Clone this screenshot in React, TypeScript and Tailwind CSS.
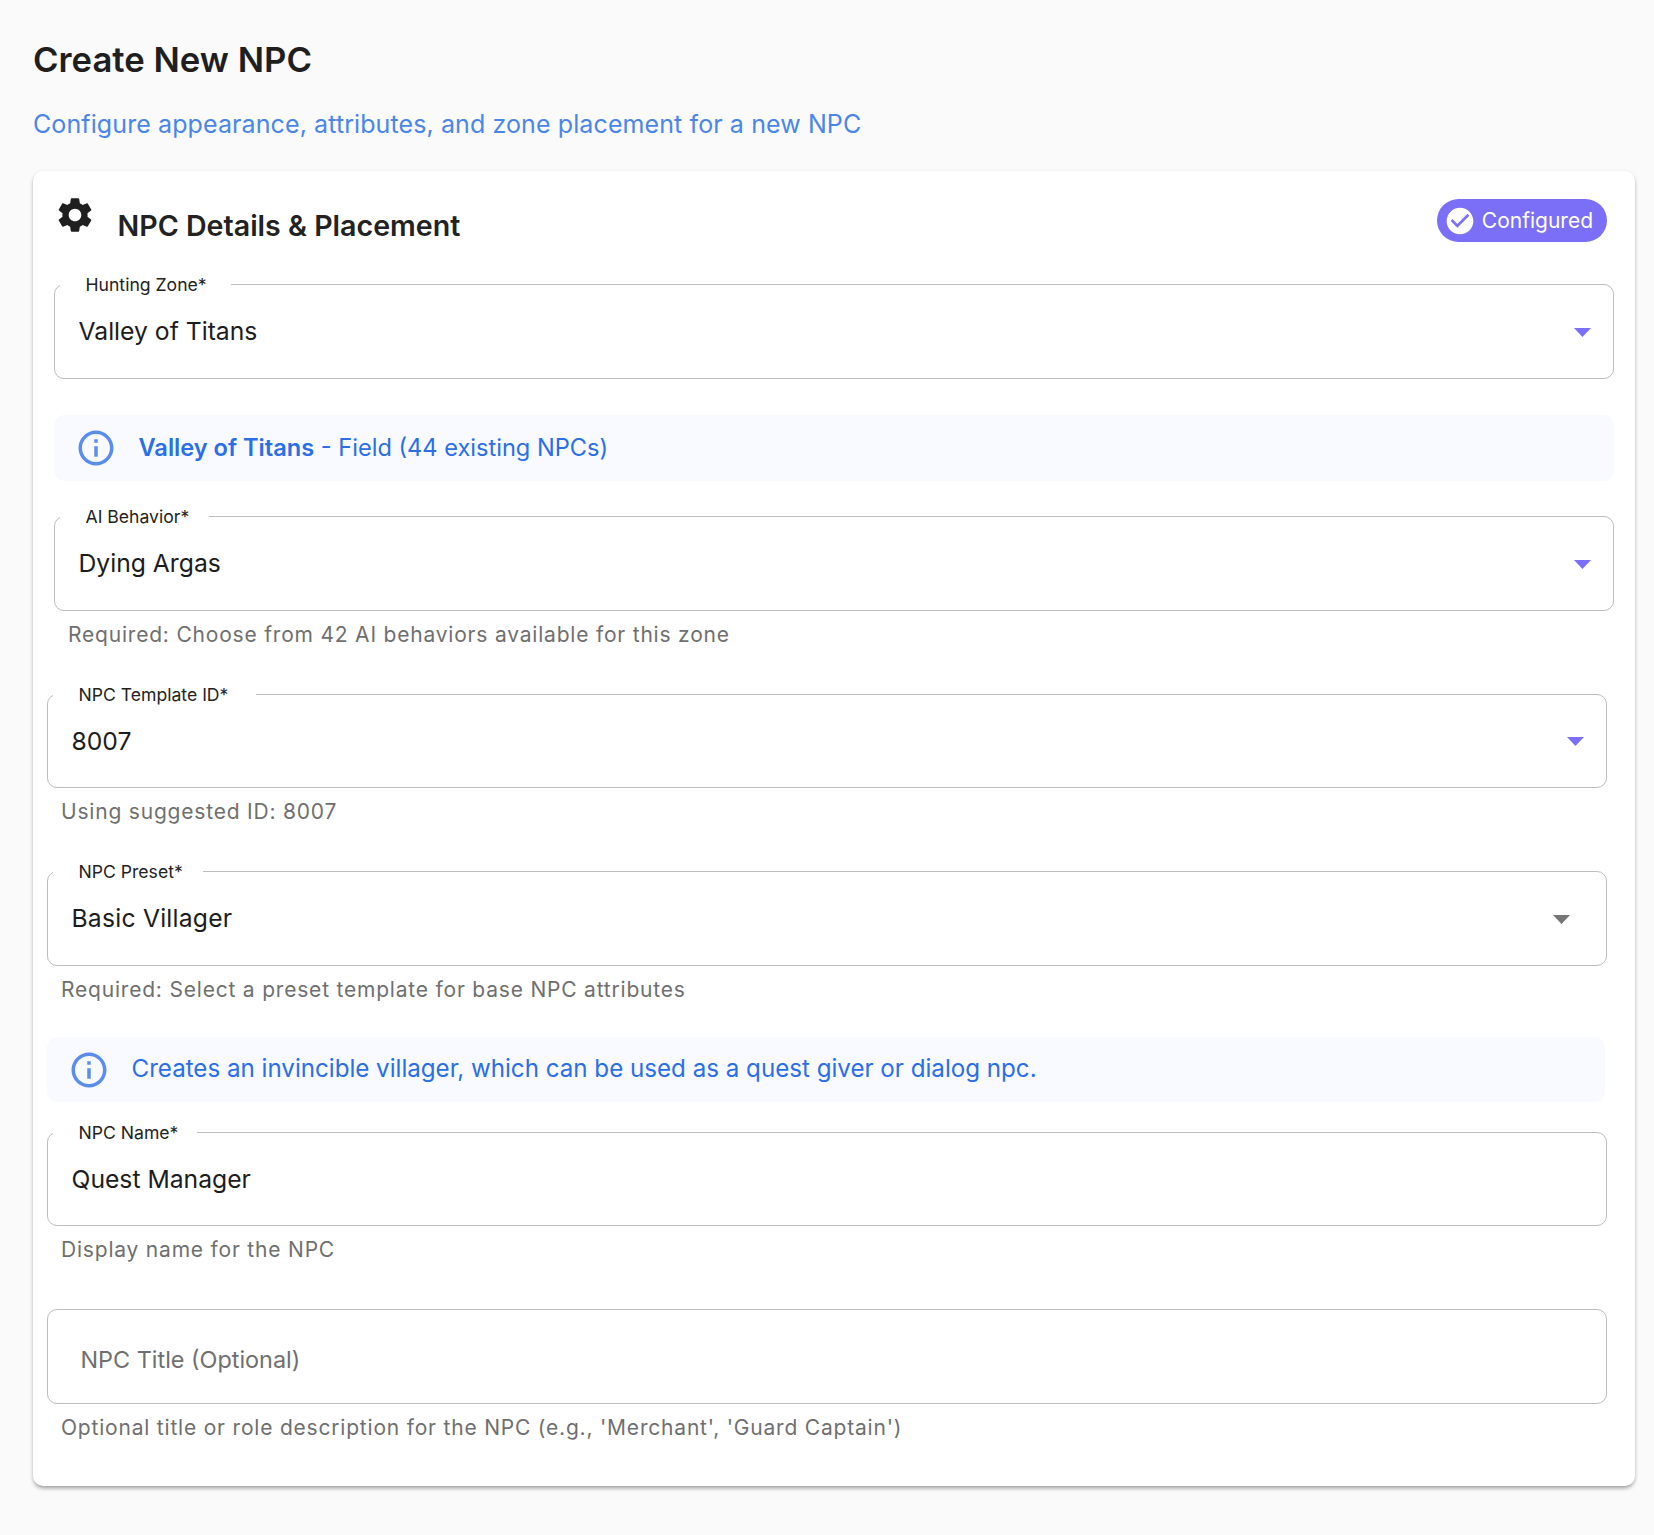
import React from "react";
import { MdSettings, MdCheckCircle, MdInfoOutline } from "react-icons/md";

function Arrow({ color }: { color: string }) {
  return (
    <svg viewBox="0 0 17 9" className="mt-[1px] w-[17px] h-[9px]" fill={color}>
      <path d="M0 0h17l-8.5 9z" />
    </svg>
  );
}

function Field({
  label,
  labelClass,
  value,
  valueClass,
  helper,
  arrow,
  arrowClass,
  placeholder,
  className,
  heightClass,
}: {
  label?: string;
  labelClass?: string;
  value: string;
  valueClass?: string;
  helper?: string;
  arrow?: string;
  arrowClass?: string;
  placeholder?: boolean;
  className?: string;
  heightClass: string;
}) {
  return (
    <div className={className}>
      <div className={`relative rounded-[10px] border border-[#bdbdbd] flex items-center justify-between bg-white pl-[23.5px] ${heightClass}`}>
        {label && (
          <span className={`absolute left-[5px] top-[-10px] bg-white pl-[25.5px] text-[17.6px] leading-[20px] text-[#222222] ${labelClass ?? ""}`}>
            {label}
          </span>
        )}
        {placeholder ? (
          <span className="pl-[9px] pt-[7px] text-[23.4px] text-[#6f6f6f]">{value}</span>
        ) : (
          <span className={`pt-[1px] text-[24.7px] text-[#1c1c1c] ${valueClass ?? ""}`}>{value}</span>
        )}
        {arrow && (
          <span className={arrowClass}>
            <Arrow color={arrow} />
          </span>
        )}
      </div>
      {helper && (
        <p className="mt-[10px] ml-[14px] text-[21px] leading-[28px] tracking-[0.8px] text-[#6f6f6f]">{helper}</p>
      )}
    </div>
  );
}

function Alert({ children, className }: { children: React.ReactNode; className?: string }) {
  return (
    <div className={`rounded-[10px] bg-[#f8faff] flex items-center pl-6 ${className ?? ""}`}>
      <MdInfoOutline className="w-[42px] h-[42px] -ml-[3px] text-[#5b8def] shrink-0" />
      <span className="ml-[21.5px] text-[#2a6ee8]">{children}</span>
    </div>
  );
}

export default function App() {
  return (
    <div className="min-h-[1535px] bg-[#fafafa] pl-[33px] pr-[19px] pt-[37px] pb-[49px] [font-family:Inter,sans-serif]">
      <h1 className="text-[34.7px] leading-[44px] font-semibold text-[#1f1f1f]">Create New NPC</h1>
      <p className="mt-[27px] text-[25px] leading-[32px] tracking-[0.1px] text-[#4a86ea]">
        Configure appearance, attributes, and zone placement for a new NPC
      </p>
      <div className="mt-[31px] h-[1315px] rounded-[10px] bg-white pl-[14px] pr-[28px] pt-[27px] shadow-[0_3px_4px_-1px_rgba(0,0,0,0.35),0_1px_5px_rgba(0,0,0,0.08)]">
        <div className="flex items-start justify-between h-[86px]">
          <div className="flex items-start">
            <MdSettings className="w-[42px] h-[42px] ml-[7px] -mt-[4px] text-[#1f1f1f]" />
            <h2 className="ml-[21.5px] mt-[10px] text-[28.6px] leading-[36px] font-semibold text-[#222222]">
              NPC Details &amp; Placement
            </h2>
          </div>
          <div className="mt-[1px] flex items-center h-[43px] rounded-full bg-[#7c6ff7] pl-[7px] pr-[14px] text-white">
            <MdCheckCircle className="w-[32px] h-[32px]" />
            <span className="ml-[6px] text-[21px]">Configured</span>
          </div>
        </div>
        <Field
          className="ml-[7px] -mr-[7px]"
          heightClass="h-[95px]"
          label="Hunting Zone*"
          labelClass="pr-[24px]"
          value="Valley of Titans"
          arrow="#7c6ff7"
          arrowClass="mr-[22px]"
        />
        <Alert className="h-[66px] mt-[36px] ml-[7px] -mr-[7px] text-[23.6px]">
          <strong className="font-semibold">Valley of Titans</strong> - Field (44 existing NPCs)
        </Alert>
        <Field
          className="mt-[35px] ml-[7px] -mr-[7px]"
          heightClass="h-[95px]"
          label="AI Behavior*"
          labelClass="pr-[20px]"
          value="Dying Argas"
          arrow="#7c6ff7"
          arrowClass="mr-[22px]"
          helper="Required: Choose from 42 AI behaviors available for this zone"
        />
        <Field
          className="mt-[45px]"
          heightClass="h-[94px]"
          label="NPC Template ID*"
          labelClass="pr-[28px]"
          value="8007"
          arrow="#7c6ff7"
          arrowClass="mr-[22px]"
          helper="Using suggested ID: 8007"
        />
        <Field
          className="mt-[45px]"
          heightClass="h-[95px]"
          label="NPC Preset*"
          labelClass="pr-[20px]"
          value="Basic Villager"
          valueClass="tracking-[0.22px]"
          arrow="#757575"
          arrowClass="mr-[36px]"
          helper="Required: Select a preset template for base NPC attributes"
        />
        <Alert className="h-[65px] mt-[33px] mr-[2px] text-[24.15px]">
          Creates an invincible villager, which can be used as a quest giver or dialog npc.
        </Alert>
        <Field
          className="mt-[30px]"
          heightClass="h-[94px]"
          label="NPC Name*"
          labelClass="pr-[19px]"
          value="Quest Manager"
          helper="Display name for the NPC"
        />
        <Field
          className="mt-[45px]"
          heightClass="h-[95px]"
          value="NPC Title (Optional)"
          placeholder
          helper="Optional title or role description for the NPC (e.g., 'Merchant', 'Guard Captain')"
        />
      </div>
    </div>
  );
}
